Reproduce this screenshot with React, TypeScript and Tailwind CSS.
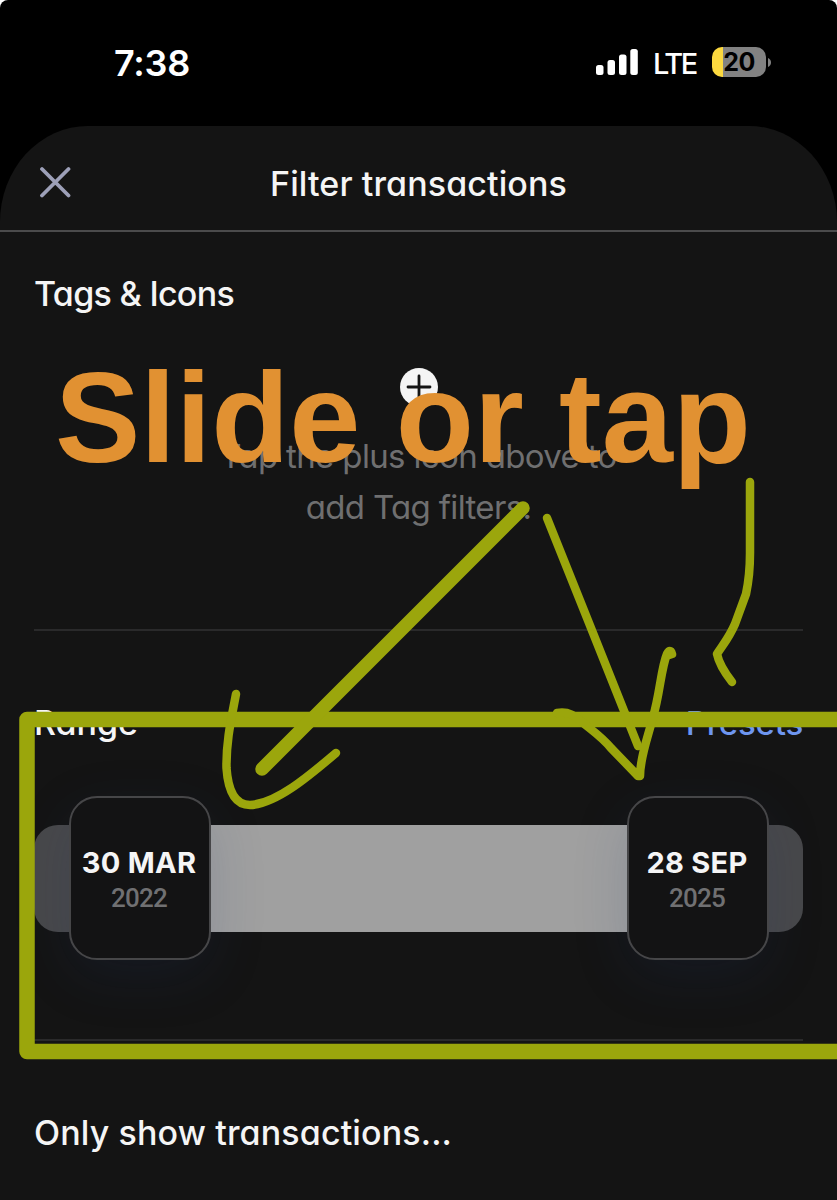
import type { ReactNode } from 'react'
import clsx from 'clsx'

function StatusBar() {
  return (
    <div className="flex h-[126px] items-start justify-between pl-[114px] pr-[66px]">
      <span className="mt-[41px] text-[36px] font-semibold leading-[44px] tracking-[-0.2px] text-white">
        7:38
      </span>
      <div className="mt-[47px] flex h-[30px] items-center">
        <svg width="42" height="28" viewBox="0 0 42 28" fill="white">
          <rect x="0" y="17" width="7.5" height="10" rx="2.5" />
          <rect x="11.5" y="12" width="7.5" height="15" rx="2.5" />
          <rect x="23" y="6.5" width="7.5" height="20.5" rx="2.5" />
          <rect x="34.3" y="1" width="7.5" height="26" rx="2.5" />
        </svg>
        <span className="ml-[15px] mt-[3px] w-[45px] text-[29px] font-medium leading-[30px] tracking-[-2.4px] text-white">
          LTE
        </span>
        <div className="ml-[14px] flex h-[30px] w-[54px] items-center justify-center overflow-hidden rounded-[10px] bg-linear-to-r from-[#fcd93f] from-[21%] to-[#828282] to-[21%] text-[25px] font-bold leading-[30px] tracking-[-0.5px] text-black">
          20
        </div>
        <svg className="ml-0.5" width="3" height="9" viewBox="0 0 3 9" fill="#828282">
          <path d="M0 0C1.8.7 3 2.4 3 4.5S1.8 8.300 0 9Z" />
        </svg>
      </div>
    </div>
  )
}

function Heading({ children, className }: { children: ReactNode; className?: string }) {
  return (
    <h2 className={clsx('text-[34px] font-medium leading-[42px] text-[#f5f5f5]', className)}>
      {children}
    </h2>
  )
}

function Handle({ date, year }: { date: string; year: string }) {
  return (
    <div className="z-10 flex h-[164px] w-[142px] shrink-0 flex-col items-center justify-center rounded-[28px] border-2 border-[#464648] bg-[#131314] shadow-[0_16px_56px_rgba(30,55,110,0.16)]">
      <span className="mr-[2px] mt-[3px] whitespace-nowrap text-[29px] font-bold leading-[36px] tracking-[0.3px] text-[#f5f5f6]">
        {date}
      </span>
      <span className="mr-[2px] font-['Roboto',sans-serif] text-[26px] font-medium leading-[34px] tracking-[-0.8px] text-[#707072]">
        {year}
      </span>
    </div>
  )
}

function RangeSlider() {
  return (
    <div className="mt-[52px] flex h-[164px] items-center">
      <div className="h-[107px] w-[35px] rounded-l-[24px] bg-[#48484a]" />
      <Handle date="30 MAR" year="2022" />
      <div className="h-[107px] flex-1 bg-[#a0a0a0]" />
      <Handle date="28 SEP" year="2025" />
      <div className="h-[107px] w-[34px] rounded-r-[24px] bg-[#48484a]" />
    </div>
  )
}

function Annotations() {
  return (
    <div className="pointer-events-none absolute inset-0 z-20 overflow-hidden">
      <svg
        className="absolute inset-0"
        width="837"
        height="1200"
        viewBox="0 0 837 1200"
        fill="none"
        stroke="#9ba60c"
        strokeLinecap="round"
        strokeLinejoin="round"
      >
        <path strokeWidth="15.500" d="M860 719.500H27V1051.500H860" />
        <path strokeWidth="13.500" d="M523 508L262 769" />
        <path
          strokeWidth="8.500"
          d="M236 694C232 716 226 740 226.500 768C228 790 234 805 250 805C276 804 309 776 336 753"
        />
        <path strokeWidth="8.500" d="M547 518L593 633L638 746" />
        <path
          strokeWidth="8.500"
          d="M557 713C569 711 575 716 582 722C594 732 602 737 611 748L638 776H640C640 757 648 737 653 717C660 694 661 668 667 654C669 650 671 650 672 654L669 655"
        />
        <path
          strokeWidth="8.500"
          d="M750 482V553C750 571 749 580 746 594L735 624C729 638 722 646 717 654C719 664 725 673 732 682"
        />
      </svg>
      <p className="absolute left-[55px] top-[346px] whitespace-nowrap font-['Liberation_Sans',sans-serif] text-[128px] font-bold leading-[144px] tracking-[-0.1px] text-[#e19132]">
        Slide or tap
      </p>
    </div>
  )
}

export default function App() {
  return (
    <div className="h-[1200px] w-[837px] bg-white">
      <div className="relative h-full overflow-hidden rounded-t-[8px] bg-black font-['Inter',sans-serif] [font-feature-settings:'cv11','ss03']">
        <StatusBar />

        <header className="flex h-[106px] items-center rounded-t-[88px_96px] border-b-2 border-[#4b4b4c] bg-[#141414]">
          <div className="flex w-[110px] pl-[39px]">
            <svg className="mt-[8px]" width="32" height="32" viewBox="0 0 32 32" stroke="#9da0b8" strokeWidth="3.800" strokeLinecap="round">
              <path d="M3 3L29.500 29.500M29.500 3L3 29.500" />
            </svg>
          </div>
          <h1 className="mt-[12px] flex-1 text-center text-[34px] font-medium leading-[42px] tracking-[0.1px] text-[#f5f5f5]">
            Filter transactions
          </h1>
          <div className="w-[110px]" />
        </header>

        <main className="h-[968px] bg-[#141414] px-[34px]">
          <section className="h-[399px] border-b-2 border-[#2a2a2b] pt-[41px]">
            <Heading className="tracking-[-0.7px]">Tags &amp; Icons</Heading>
            <div className="mt-[53px] flex flex-col items-center">
              <svg width="38" height="38" viewBox="0 0 38 38">
                <circle cx="19" cy="19" r="19" fill="#f5f5f5" />
                <path d="M19 8V30M8 19H30" stroke="#141414" strokeWidth="2.800" strokeLinecap="round" />
              </svg>
              <p className="mt-[25px] text-center text-[33px] leading-[51px] tracking-[-0.65px] text-[#6f6f70]">
                Tap the plus icon above to
                <br />
                add Tag filters.
              </p>
            </div>
          </section>

          <section className="h-[410px] border-b-2 border-[#2a2a2b] pt-[71px]">
            <div className="flex items-center justify-between">
              <Heading>Range</Heading>
              <button className="text-[33px] font-medium leading-[42px] tracking-[-0.2px] text-[#6e96f0]">
                Presets
              </button>
            </div>
            <RangeSlider />
          </section>

          <section className="pt-[71px]">
            <Heading className="tracking-[0.13px]">Only show transactions...</Heading>
          </section>
        </main>

        <Annotations />
      </div>
    </div>
  )
}
